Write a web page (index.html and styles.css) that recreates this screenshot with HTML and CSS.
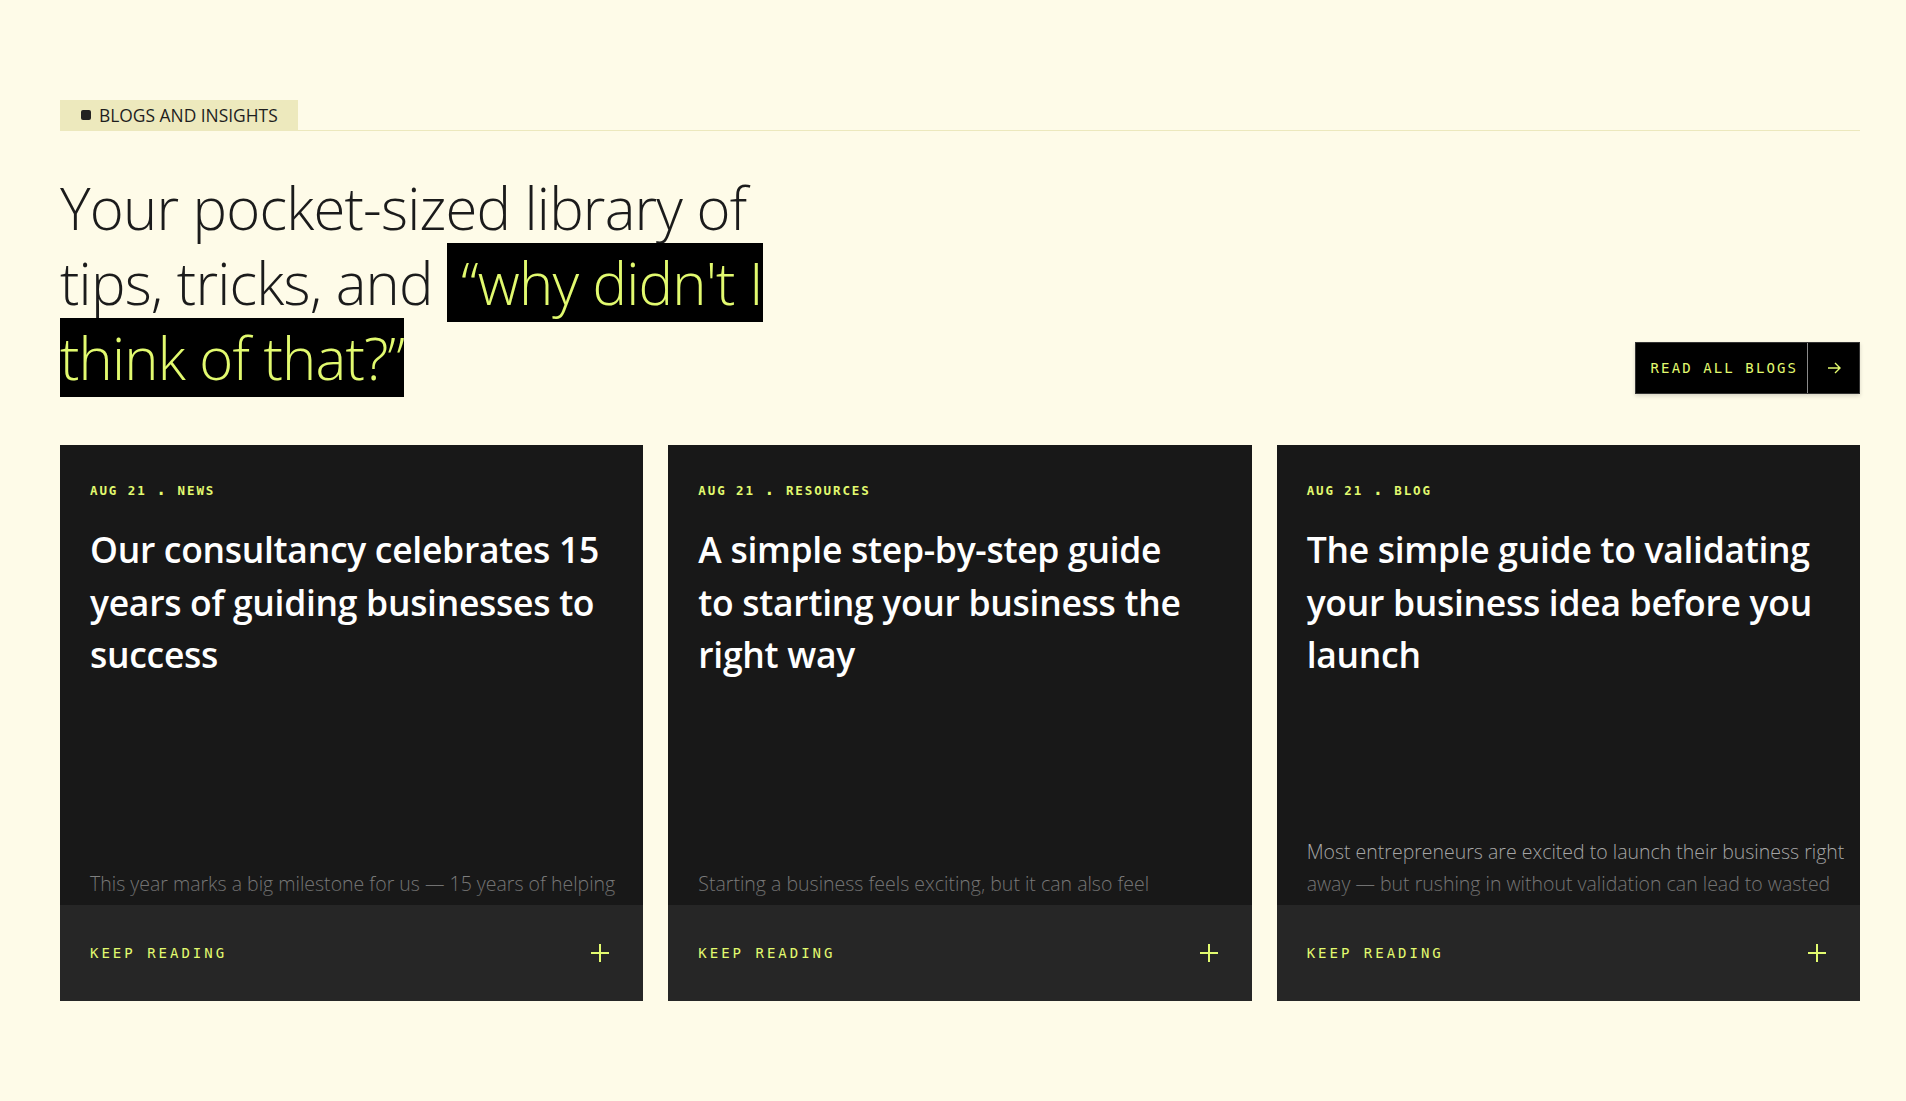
FILE: index.html
```html
<!DOCTYPE html>
<html lang="en">
<head>
  <meta charset="UTF-8">
  <meta name="viewport" content="width=device-width, initial-scale=1.0">
  <title>Blogs and insights</title>
  <link rel="stylesheet" href="styles.css">
</head>
<body>
  <section class="blogs">
    <div class="blogs-top">
      <span class="tag"><span class="tag-dot"></span>BLOGS AND INSIGHTS</span>
    </div>

    <div class="blogs-head">
      <h1>Your pocket-sized library of<br>tips, tricks, and <span class="mark">&nbsp;“why didn't I<br>think of that?”</span></h1>
      <a href="#" class="btn">
        <span class="btn-label">READ ALL BLOGS</span>
        <span class="btn-icon">
          <svg width="16" height="16" viewBox="0 0 16 16" fill="none" stroke="currentColor" stroke-width="1.4">
            <path d="M2 8h12M9 3l5 5-5 5"/>
          </svg>
        </span>
      </a>
    </div>

    <div class="cards">
      <article class="card">
        <div class="card-body">
          <div class="card-meta">AUG 21 <b>.</b> NEWS</div>
          <h2>Our consultancy celebrates 15 years of guiding businesses to success</h2>
          <div class="card-text">
            <p>This year marks a big milestone for us — 15 years of helping businesses start, grow and thrive across every industry we work in.</p>
          </div>
        </div>
        <a href="#" class="card-foot">
          <span>KEEP READING</span>
          <svg width="18" height="18" viewBox="0 0 18 18" stroke="currentColor" stroke-width="2"><path d="M9 0v18M0 9h18"/></svg>
        </a>
      </article>

      <article class="card">
        <div class="card-body">
          <div class="card-meta">AUG 21 <b>.</b> RESOURCES</div>
          <h2>A simple step-by-step guide to&nbsp;starting your business the right way</h2>
          <div class="card-text">
            <p>Starting a business feels exciting, but it can also feel overwhelming when you don't know where to begin or what comes next.</p>
          </div>
        </div>
        <a href="#" class="card-foot">
          <span>KEEP READING</span>
          <svg width="18" height="18" viewBox="0 0 18 18" stroke="currentColor" stroke-width="2"><path d="M9 0v18M0 9h18"/></svg>
        </a>
      </article>

      <article class="card">
        <div class="card-body">
          <div class="card-meta">AUG 21 <b>.</b> BLOG</div>
          <h2>The simple guide to validating your business idea before you launch</h2>
          <div class="card-text card-text--tall">
            <p>Most entrepreneurs are excited to launch their business right away — but rushing in without validation can lead to wasted time, money and energy.</p>
          </div>
        </div>
        <a href="#" class="card-foot">
          <span>KEEP READING</span>
          <svg width="18" height="18" viewBox="0 0 18 18" stroke="currentColor" stroke-width="2"><path d="M9 0v18M0 9h18"/></svg>
        </a>
      </article>
    </div>
  </section>
</body>
</html>
```

FILE: styles.css
```css
body {
  margin: 0;
  background: #fefbe8;
  font-family: "Open Sans", "Noto Sans", sans-serif;
  color: #1b1b1b;
}
a {
  text-decoration: none;
}
.blogs {
  padding: 100px 46px 80px 60px;
}
.blogs-top {
  border-bottom: 1px solid #ece8bd;
}
.tag {
  display: inline-flex;
  align-items: center;
  gap: 8px;
  height: 30px;
  padding: 0 20px 0 21px;
  background: #ede9bd;
  font-size: 17.4px;
  color: #1e1e1e;
}
.tag-dot {
  width: 10px;
  height: 10px;
  border-radius: 2px;
  background: #222;
}
.blogs-head {
  display: flex;
  justify-content: space-between;
  align-items: flex-end;
  margin-top: 39px;
}
h1 {
  margin: 0;
  font-size: 58px;
  font-weight: 350;
  line-height: 75px;
  letter-spacing: -0.8px;
}
.mark {
  background: #000;
  color: #e2fa6f;
  -webkit-box-decoration-break: clone;
  box-decoration-break: clone;
}
.btn {
  display: flex;
  height: 50px;
  background: #000;
  border: 1px solid #333;
  box-shadow: 0 2px 4px rgba(0,0,0,0.15);
  color: #e2fa6f;
  font-family: "DejaVu Sans Mono", monospace;
  font-size: 14px;
  letter-spacing: 2.1px;
  margin-bottom: 1px;
}
.btn-label {
  display: flex;
  align-items: center;
  padding: 0 9px 0 15px;
}
.btn-icon {
  display: flex;
  align-items: center;
  justify-content: center;
  width: 51px;
  border-left: 1px solid #8a8a8a;
}
.cards {
  display: grid;
  grid-template-columns: repeat(3, 1fr);
  gap: 25px;
  margin-top: 50px;
}
.card {
  display: flex;
  flex-direction: column;
  height: 556px;
  background: #181818;
}
.card-body {
  position: relative;
  display: flex;
  flex-direction: column;
  height: 460px;
  padding: 34px 30px 0 30px;
  box-sizing: border-box;
  overflow: hidden;
}
.card-body::after {
  content: "";
  position: absolute;
  left: 0;
  right: 0;
  bottom: 0;
  height: 70px;
  background: linear-gradient(to bottom, rgba(24,24,24,0) 20%, rgba(24,24,24,0.6));
}
.card-meta {
  font-family: "DejaVu Sans Mono", monospace;
  font-size: 12.5px;
  font-weight: bold;
  line-height: 20px;
  letter-spacing: 1.9px;
  color: #e2fa6f;
}
.card-meta b {
  font-size: 17px;
}
h2 {
  margin: 22px 0 0 0;
  font-size: 35.5px;
  font-weight: 600;
  line-height: 52.5px;
  color: #fff;
  letter-spacing: -0.3px;
}
.card-text {
  margin: auto -16px 0 0;
  height: 37px;
}
.card-text--tall {
  height: 69px;
}
.card-text p {
  margin: 0;
  font-size: 19.5px;
  font-weight: 300;
  line-height: 32px;
  color: #ababab;
}
.card-foot {
  display: flex;
  align-items: center;
  justify-content: space-between;
  flex: 1;
  padding: 0 34px 0 30px;
  background: #262626;
  color: #e2fa6f;
  font-family: "DejaVu Sans Mono", monospace;
  font-size: 14px;
  letter-spacing: 3px;
}
```
